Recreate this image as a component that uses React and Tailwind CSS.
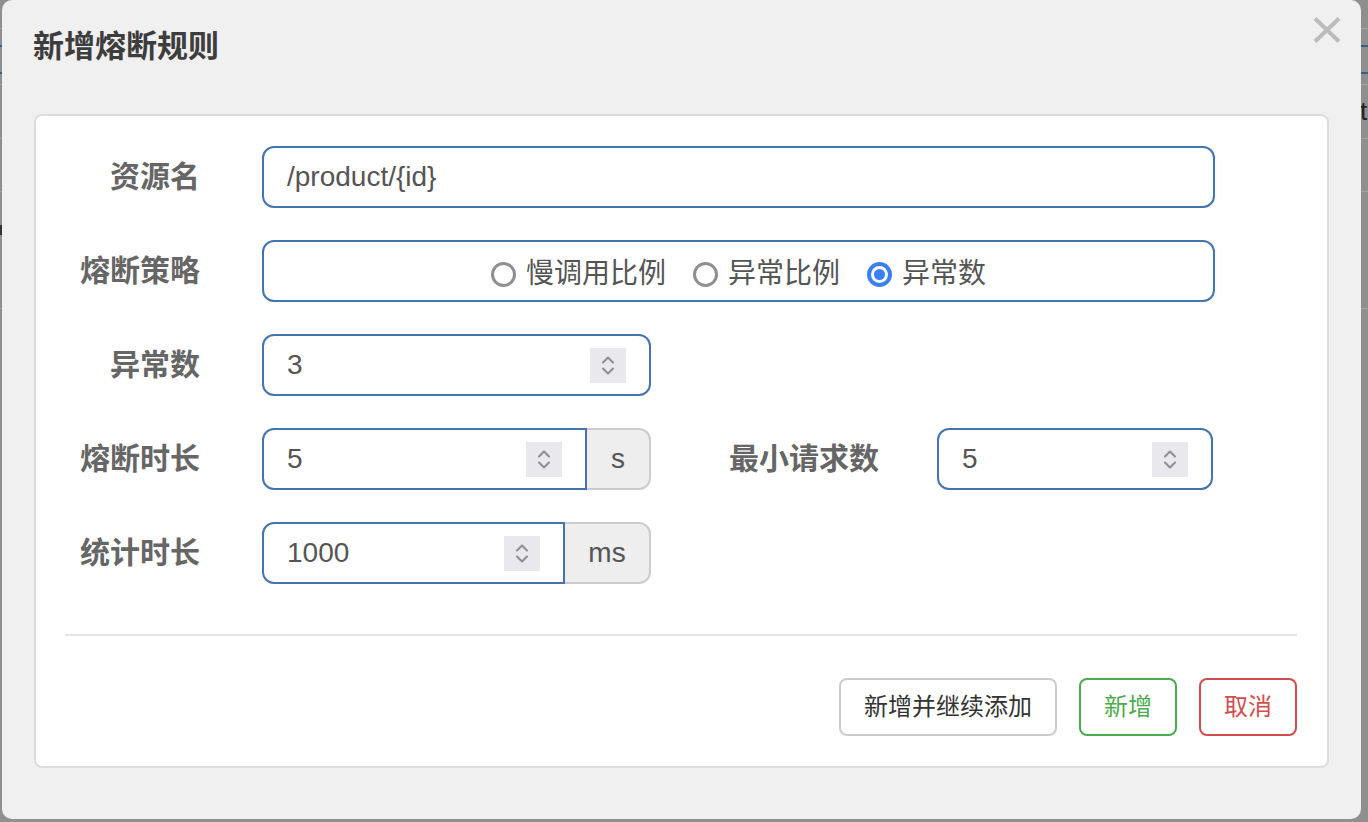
import React from 'react';

const font = { fontFamily: '"Liberation Sans", "Noto Sans CJK SC", sans-serif' };

function Spinner() {
  return (
    <div className="w-[36px] h-[35px] bg-[#e9e9ed] flex flex-col items-center justify-center gap-[3px] shrink-0">
      <svg width="14" height="9" viewBox="0 0 14 9" fill="none">
        <path d="M2 7.5 L7 2.5 L12 7.5" stroke="#8c8c92" strokeWidth="2" strokeLinecap="round" strokeLinejoin="round" />
      </svg>
      <svg width="14" height="9" viewBox="0 0 14 9" fill="none">
        <path d="M2 1.5 L7 6.5 L12 1.5" stroke="#8c8c92" strokeWidth="2" strokeLinecap="round" strokeLinejoin="round" />
      </svg>
    </div>
  );
}

function NumberInput({ value, className = '' }) {
  return (
    <div className={`h-[62px] border-2 border-[#4474b0] bg-white flex items-center pl-[23px] pr-[23px] ${className}`}>
      <span className="flex-1 text-[28px] text-[#555]">{value}</span>
      <Spinner />
    </div>
  );
}

function Addon({ children, width }) {
  return (
    <div className={`h-[62px] ${width} border-2 border-l-0 border-[#cccccc] bg-[#eeeeee] rounded-r-[12px] flex items-center justify-center text-[28px] text-[#555]`}>
      {children}
    </div>
  );
}

function Label({ children }) {
  return (
    <div className="w-[164px] shrink-0 text-right text-[30px] font-bold text-[#666] leading-none">{children}</div>
  );
}

function Radio({ label, checked }) {
  return (
    <label className="flex items-center gap-[10px]">
      {checked ? (
        <span className="w-[25px] h-[25px] rounded-full bg-[#3a80f4] flex items-center justify-center">
          <span className="w-[17px] h-[17px] rounded-full bg-white flex items-center justify-center">
            <span className="w-[11px] h-[11px] rounded-full bg-[#3a80f4]" />
          </span>
        </span>
      ) : (
        <span className="w-[25px] h-[25px] rounded-full border-[3px] border-[#8e8e93] bg-white" />
      )}
      <span className="text-[28px] text-[#555] leading-none">{label}</span>
    </label>
  );
}

export default function App() {
  return (
    <div className="relative w-[1368px] h-[822px] bg-[#8f8f8f] overflow-hidden" style={font}>
      {/* page behind the overlay */}
      <div className="absolute inset-0">
        <div className="absolute left-0 right-0 top-[28px] h-px bg-[#a3a3a3]" />
        <div className="absolute left-0 right-0 top-[45px] h-[2px] bg-[#3b5f8c]" />
        <div className="absolute left-0 right-0 top-[72px] h-[2px] bg-[#3b5f8c]" />
        <div className="absolute left-0 right-0 top-[84px] h-px bg-[#a3a3a3]" />
        <div className="absolute left-0 right-0 top-[138px] h-px bg-[#a3a3a3]" />
        <div className="absolute left-0 right-0 top-[191px] h-px bg-[#a3a3a3]" />
        <div className="absolute left-0 right-0 top-[308px] h-px bg-[#a3a3a3]" />
        <div className="absolute left-0 top-[225px] w-[2px] h-[10px] bg-[#333]" />
        <div className="absolute left-[1360px] top-[98px] text-[26px] text-[#222] leading-none">t</div>
      </div>

      {/* dialog */}
      <div className="relative ml-[2px] w-[1359px] h-[819px] bg-[#f0f0f0] rounded-[10px] flex flex-col">
        <div className="h-[114px] flex items-start justify-between pl-[31px] pr-[20px]">
          <h2 className="mt-[26px] text-[31px] font-bold text-[#3d3d3d] leading-[42px]">新增熔断规则</h2>
          <button className="mt-[17px] w-[28px] h-[26px] flex items-center justify-center">
            <svg width="28" height="26" viewBox="0 0 28 26" fill="none">
              <path d="M2 1.5 L26 24.5 M26 1.5 L2 24.5" stroke="#bcbcbc" strokeWidth="4" />
            </svg>
          </button>
        </div>

        <div className="mx-[32px] h-[654px] bg-white border-2 border-[#dddddd] rounded-[8px] flex flex-col pt-[30px]">
          <div className="flex flex-col gap-[32px]">
            {/* 资源名 */}
            <div className="flex items-center">
              <Label>资源名</Label>
              <div className="ml-[62px] w-[953px] h-[62px] border-2 border-[#4474b0] rounded-[12px] flex items-center pl-[23px] text-[28px] text-[#555]">
                /product/{'{id}'}
              </div>
            </div>

            {/* 熔断策略 */}
            <div className="flex items-center">
              <Label>熔断策略</Label>
              <div className="ml-[62px] w-[953px] h-[62px] border-2 border-[#4474b0] rounded-[12px] flex items-center justify-center gap-[27px] pt-[6px]">
                <Radio label="慢调用比例" />
                <Radio label="异常比例" />
                <Radio label="异常数" checked />
              </div>
            </div>

            {/* 异常数 */}
            <div className="flex items-center">
              <Label>异常数</Label>
              <NumberInput value="3" className="ml-[62px] w-[389px] rounded-[12px]" />
            </div>

            {/* 熔断时长 / 最小请求数 */}
            <div className="flex items-center">
              <Label>熔断时长</Label>
              <div className="ml-[62px] flex">
                <NumberInput value="5" className="w-[325px] rounded-l-[12px]" />
                <Addon width="w-[64px]">s</Addon>
              </div>
              <div className="ml-[78px] text-[30px] font-bold text-[#666] leading-none">最小请求数</div>
              <NumberInput value="5" className="ml-[58px] w-[276px] rounded-[12px]" />
            </div>

            {/* 统计时长 */}
            <div className="flex items-center">
              <Label>统计时长</Label>
              <div className="ml-[62px] flex">
                <NumberInput value="1000" className="w-[303px] rounded-l-[12px]" />
                <Addon width="w-[86px]">ms</Addon>
              </div>
            </div>
          </div>

          <div className="mt-[50px] ml-[29px] mr-[30px] h-[2px] bg-[#e5e5e5]" />

          <div className="mt-[42px] mr-[30px] flex justify-end gap-[22px]">
            <button className="w-[218px] h-[58px] border-2 border-[#cccccc] rounded-[8px] bg-white text-[24px] text-[#333]">新增并继续添加</button>
            <button className="w-[98px] h-[58px] border-2 border-[#4cab4c] rounded-[8px] bg-white text-[24px] text-[#4cab4c]">新增</button>
            <button className="w-[98px] h-[58px] border-2 border-[#d44d4d] rounded-[8px] bg-white text-[24px] text-[#d44d4d]">取消</button>
          </div>
        </div>
      </div>
    </div>
  );
}
